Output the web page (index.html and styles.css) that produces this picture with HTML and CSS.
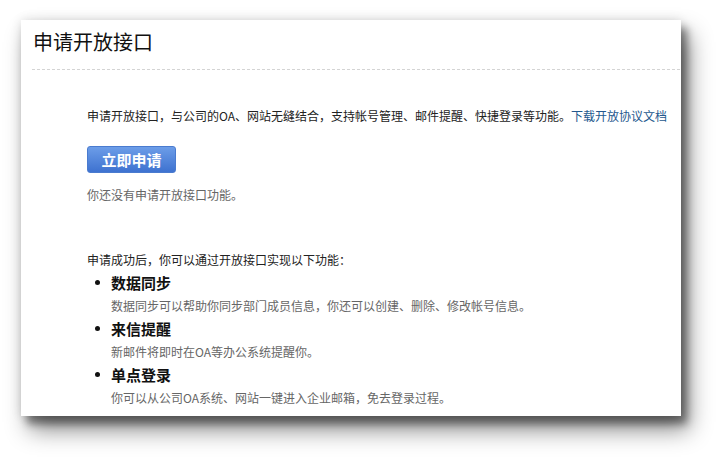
FILE: index.html
```html
<!DOCTYPE html>
<html lang="zh-CN">
<head>
<meta charset="utf-8">
<title>申请开放接口</title>
<link rel="stylesheet" href="styles.css">
</head>
<body>
<div class="card">
  <div class="head"><h1 class="title">申请开放接口</h1></div>
  <div class="content">
    <p class="intro">申请开放接口，与公司的OA、网站无缝结合，支持帐号管理、邮件提醒、快捷登录等功能。<a class="link" href="#">下载开放协议文档</a></p>
    <button class="btn" type="button">立即申请</button>
    <p class="status">你还没有申请开放接口功能。</p>
    <p class="lead">申请成功后，你可以通过开放接口实现以下功能：</p>
    <ul class="features">
      <li class="feature">
        <div class="f-title">数据同步</div>
        <div class="f-desc">数据同步可以帮助你同步部门成员信息，你还可以创建、删除、修改帐号信息。</div>
      </li>
      <li class="feature">
        <div class="f-title">来信提醒</div>
        <div class="f-desc">新邮件将即时在OA等办公系统提醒你。</div>
      </li>
      <li class="feature">
        <div class="f-title">单点登录</div>
        <div class="f-desc">你可以从公司OA系统、网站一键进入企业邮箱，免去登录过程。</div>
      </li>
    </ul>
  </div>
</div>
</body>
</html>
```

FILE: styles.css
```css
* { box-sizing: border-box; }
html, body { background: #fff; }
body {
  margin: 0;
  padding: 20px 0 0 21px;
  min-height: 458px;
  font-family: "Noto Sans CJK SC", "Liberation Sans", sans-serif;
  font-size: 12px;
  color: #222;
}
.card {
  width: 660px;
  height: 396px;
  background: #fff;
  box-shadow:
    0 0 10px rgba(0,0,0,0.12),
    6px 8px 8px rgba(0,0,0,0.40),
    8px 14px 22px rgba(0,0,0,0.45);
}
.head {
  margin: 0 1px 0 11px;
  padding: 10px 0 15px 1px;
  border-bottom: 1px dashed #d4d4d4;
}
.title {
  margin: 0;
  font-size: 20px;
  line-height: 24px;
  font-weight: normal;
  color: #111;
}
.content {
  padding-left: 66px;
}
.intro {
  margin: 37px 0 0;
  line-height: 18px;
  color: #222;
}
.link { color: #24588e; text-decoration: none; }
.btn {
  display: block;
  margin-top: 21px;
  width: 89px;
  height: 27px;
  padding: 0;
  border: 1px solid #4a7bcf;
  border-radius: 3px;
  background: linear-gradient(#6c9de8, #3e72d0);
  color: #fff;
  font-family: inherit;
  font-size: 15px;
  font-weight: bold;
  line-height: 25px;
  text-align: center;
}
.status {
  margin: 13px 0 0;
  line-height: 18px;
  color: #666;
}
.lead {
  margin: 44px 0 0;
  line-height: 23px;
  color: #222;
}
.features {
  list-style: none;
  margin: 0;
  padding: 0 0 0 24px;
}
.feature { position: relative; }
.feature::before {
  content: "";
  position: absolute;
  left: -16px;
  top: 9px;
  width: 5px;
  height: 5px;
  border-radius: 50%;
  background: #111;
}
.f-title {
  font-size: 15px;
  font-weight: bold;
  line-height: 23px;
  color: #111;
}
.f-desc {
  line-height: 23px;
  color: #666;
}
```
